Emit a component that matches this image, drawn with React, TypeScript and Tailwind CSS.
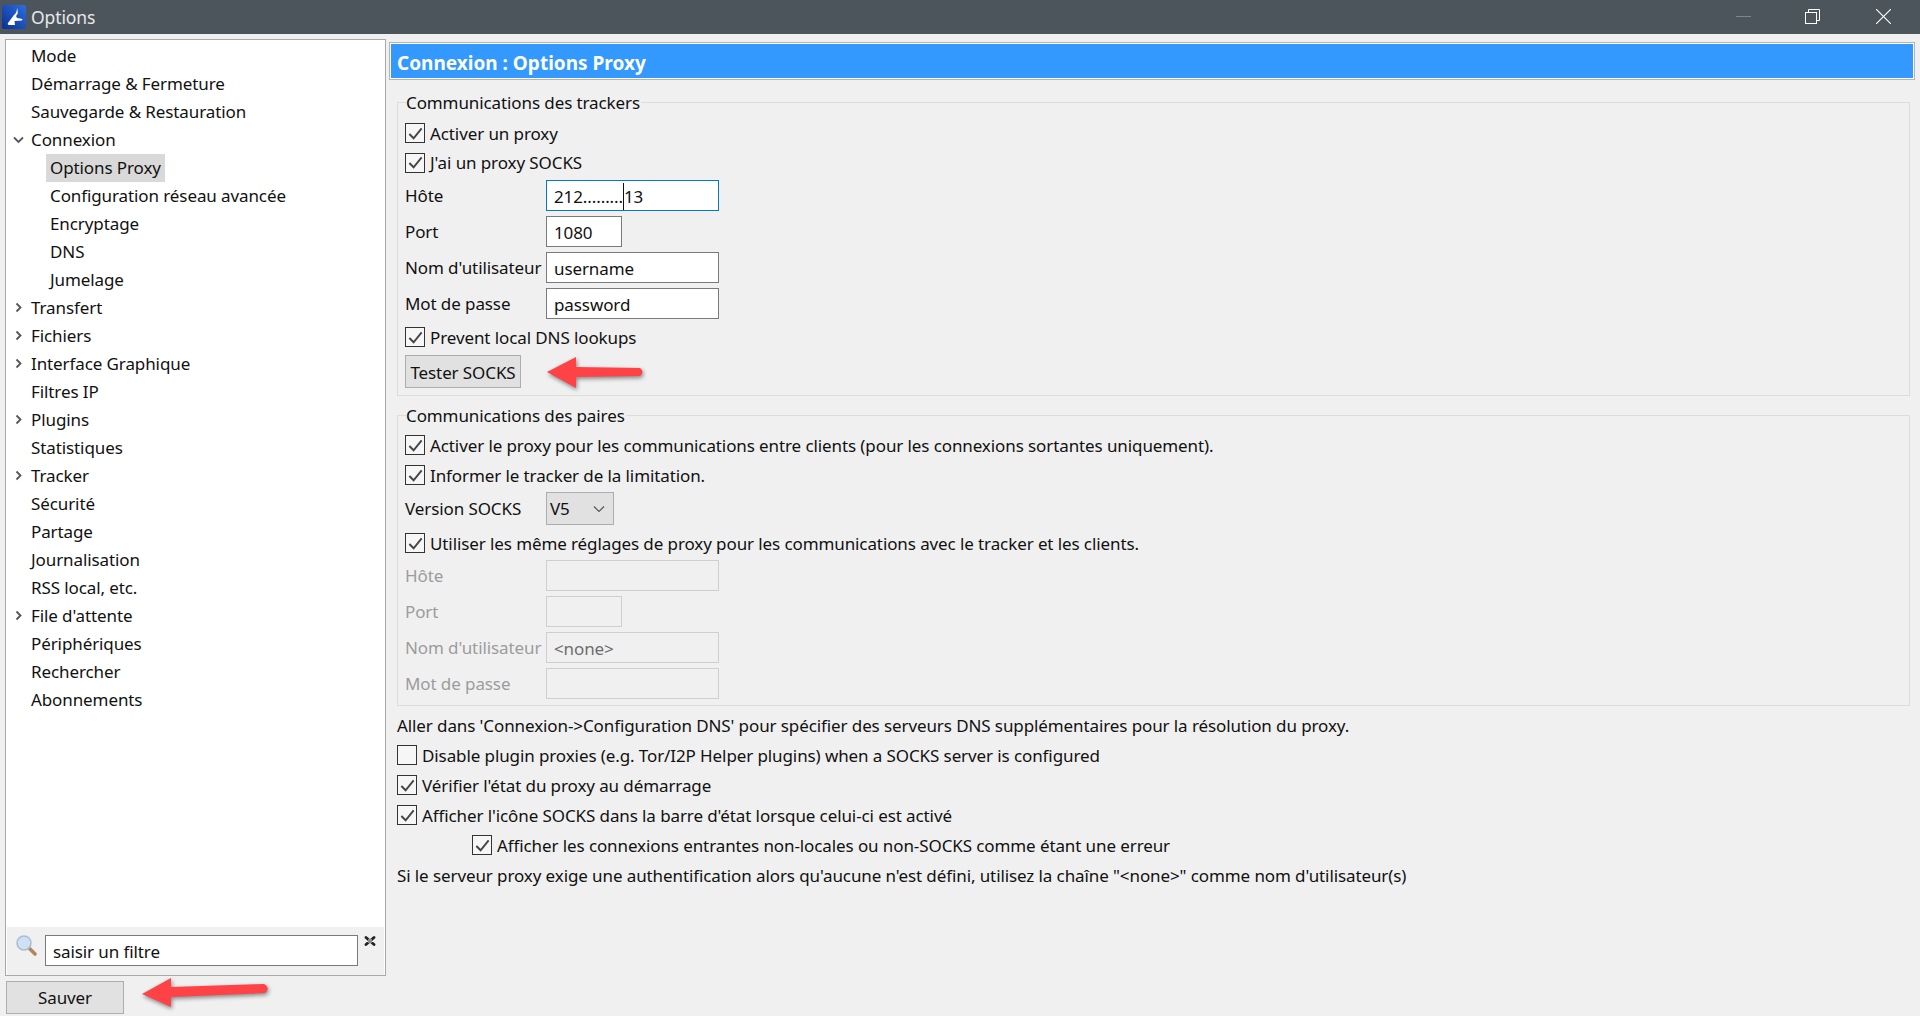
import React from "react";

const Tree = ({ label, arrow, child, selected }: { label: string; arrow?: "right" | "down"; child?: boolean; selected?: boolean }) => (
  <div className={`h-[28px] flex items-center ${child ? "pl-[44px]" : "pl-[25px]"} relative`}>
    {arrow && (
      <svg className="absolute left-[7px] top-[8px] w-[11px] h-[11px]" viewBox="0 0 11 11" fill="none" stroke="#555" strokeWidth="1.8">
        {arrow === "right" ? <path d="M3.5 1.5 L7.5 5.5 L3.5 9.5" /> : <path d="M1 3.5 L5.5 8 L10 3.5" />}
      </svg>
    )}
    <span className={`h-[28px] leading-[27px] whitespace-nowrap ${selected ? "bg-[#d9d9d9] px-[4px] -ml-[4px]" : ""}`}>{label}</span>
  </div>
);

const Check = ({ checked = true }: { checked?: boolean }) => (
  <span className="w-[20px] h-[20px] border-[1.5px] border-[#333] bg-[#f6f6f6] flex items-center justify-center shrink-0">
    {checked && (
      <svg viewBox="0 0 18 18" className="w-[17px] h-[17px]" fill="none" stroke="#444" strokeWidth="2">
        <path d="M2.5 9.5 L7 14 L15.5 3.5" />
      </svg>
    )}
  </span>
);

const CheckRow = ({ label, h = "h-[30px]", cls = "", checked }: { label: string; h?: string; cls?: string; checked?: boolean }) => (
  <div className={`${h} flex items-center gap-[5px] whitespace-nowrap ${cls}`}>
    <Check checked={checked} />
    <span className="pt-[1px]">{label}</span>
  </div>
);

const Field = ({ label, value, w = "w-[173px]", disabled, focus, cls = "" }: { label: string; value?: React.ReactNode; w?: string; disabled?: boolean; focus?: boolean; cls?: string }) => (
  <div className={`flex items-center h-[31px] ${cls}`}>
    <span className={`w-[141px] pt-[1px] whitespace-nowrap ${disabled ? "text-[#9c9c9c]" : ""}`}>{label}</span>
    <div className={`${w} h-[31px] border flex items-center pl-[7px] pt-[2px] ${focus ? "border-[#0078d7] bg-white" : disabled ? "border-[#cfcfcf] bg-[#f0f0f0] text-[#6d6d6d]" : "border-[#7a7a7a] bg-white"}`}>
      {value}
    </div>
  </div>
);

const Group = ({ title, children, cls = "" }: { title: string; children: React.ReactNode; cls?: string }) => (
  <div className={`relative border border-[#dcdcdc] mr-[5px] ${cls}`}>
    <span className="absolute left-[8px] -top-[13px] leading-[26px] bg-[#f0f0f0] pr-[1px] whitespace-nowrap">{title}</span>
    {children}
  </div>
);

const RedArrow = ({ cls, d, box }: { cls: string; d: string; box: string }) => (
  <svg className={`absolute ${cls}`} viewBox={box} fill="#ff4246" style={{ filter: "drop-shadow(1px 2px 2px rgba(0,0,0,.45))" }}>
    <path d={d} />
  </svg>
);

export default function App() {
  return (
    <div className="w-[1920px] h-[1016px] overflow-hidden bg-[#f0f0f0] text-[#111] text-[17px] tracking-[-0.1px] font-['Noto_Sans','Open_Sans',sans-serif] relative">
      <div className="h-[34px] bg-[#4d555c] flex items-center relative">
        <svg className="ml-[2px] w-[24px] h-[24px]" viewBox="0 0 24 24">
          <defs>
            <linearGradient id="logo" x1="0" y1="1" x2="1" y2="0">
              <stop offset="0" stopColor="#0b2f93" />
              <stop offset="1" stopColor="#2d6ee0" />
            </linearGradient>
          </defs>
          <rect width="24" height="24" rx="2" fill="url(#logo)" />
          <path d="M15 3 Q15 8 12 10 L6 18 Q5 20 8 20 L13 20 L12.5 16 L20 15.5 L20.5 14 L15 13 L14 11 Q17 8 15 3 Z" fill="#fff" />
        </svg>
        <span className="ml-[5px] text-[17.5px] text-[#e6e8ea]">Options</span>
        <svg className="absolute right-[169px] top-[16px] w-[15px] h-[1px]" viewBox="0 0 15 1"><rect width="15" height="1" fill="#7f868c" /></svg>
        <svg className="absolute right-[100px] top-[9px] w-[15px] h-[15px]" viewBox="0 0 15 15" fill="none" stroke="#fff" strokeWidth="1">
          <rect x="0.5" y="3.5" width="11" height="11" />
          <path d="M3.5 3 V0.5 H14.5 V11.5 H12" />
        </svg>
        <svg className="absolute right-[29px] top-[9px] w-[15px] h-[15px]" viewBox="0 0 15 15" stroke="#fff" strokeWidth="1.1">
          <path d="M0 0 L15 15 M15 0 L0 15" />
        </svg>
      </div>

      <div className="flex pl-[5px] pt-[5px]">
        <div className="w-[381px] shrink-0 flex flex-col">
          <div className="h-[937px] border border-[#a9a9a9] bg-white flex flex-col">
            <div className="flex-1 pt-[2px]">
              <Tree label="Mode" />
              <Tree label="Démarrage & Fermeture" />
              <Tree label="Sauvegarde & Restauration" />
              <Tree label="Connexion" arrow="down" />
              <Tree label="Options Proxy" child selected />
              <Tree label="Configuration réseau avancée" child />
              <Tree label="Encryptage" child />
              <Tree label="DNS" child />
              <Tree label="Jumelage" child />
              <Tree label="Transfert" arrow="right" />
              <Tree label="Fichiers" arrow="right" />
              <Tree label="Interface Graphique" arrow="right" />
              <Tree label="Filtres IP" />
              <Tree label="Plugins" arrow="right" />
              <Tree label="Statistiques" />
              <Tree label="Tracker" arrow="right" />
              <Tree label="Sécurité" />
              <Tree label="Partage" />
              <Tree label="Journalisation" />
              <Tree label="RSS local, etc." />
              <Tree label="File d'attente" arrow="right" />
              <Tree label="Périphériques" />
              <Tree label="Rechercher" />
              <Tree label="Abonnements" />
            </div>
            <div className="h-[48px] mx-[1px] bg-[#f0f0f0] flex items-start pt-[8px] pl-[9px]">
              <svg className="w-[21px] h-[21px] shrink-0" viewBox="0 0 21 21">
                <path d="M13.5 13.5 L19 19" stroke="#b5835a" strokeWidth="3.5" strokeLinecap="round" />
                <circle cx="8" cy="8" r="7" fill="#cfe0f5" stroke="#a9bcd2" strokeWidth="1.5" />
              </svg>
              <div className="ml-[8px] w-[313px] h-[31px] bg-white border border-[#7a7a7a] flex items-center pl-[7px] pt-[2px]">saisir un filtre</div>
              <svg className="ml-[6px] mt-[1px] w-[12px] h-[10px] shrink-0" viewBox="0 0 12 10" fill="none">
                <path d="M2 1.5 L10 8.5 M10 1.5 L2 8.5" stroke="#222" strokeWidth="2.8" strokeLinecap="round" />
                <rect x="4" y="3" width="4" height="4" fill="#8a8a8a" />
              </svg>
            </div>
          </div>
          <button className="mt-[5px] ml-[1px] w-[118px] h-[33px] bg-[#e1e1e1] border border-[#adadad] flex items-center justify-center pt-[1px]">Sauver</button>
        </div>

        <div className="flex-1 ml-[3px] pr-[5px]">
          <div className="mt-[3px] h-[38px] border border-[#b4b4b4] p-[1px] bg-white">
            <div className="h-full bg-[#3399ff] text-white font-bold text-[19px] tracking-normal flex items-center pl-[6px] pt-[5px] whitespace-nowrap">Connexion : Options Proxy</div>
          </div>

          <div className="pl-[8px]">
            <Group title="Communications des trackers" cls="mt-[22px] h-[294px] pl-[7px] pt-[15px]">
              <CheckRow label="Activer un proxy" />
              <CheckRow label="J'ai un proxy SOCKS" h="h-[29px]" />
              <Field label="Hôte" focus cls="mt-[3px]" value={<span className="flex items-center">212.........<span className="w-[1px] h-[27px] bg-[#111]" />13</span>} />
              <Field label="Port" value="1080" w="w-[76px]" cls="mt-[5px]" />
              <Field label="Nom d'utilisateur" value="username" cls="mt-[5px]" />
              <Field label="Mot de passe" value="password" cls="mt-[5px]" />
              <CheckRow label="Prevent local DNS lookups" cls="mt-[3px]" />
              <button className="mt-[3px] w-[116px] h-[33px] bg-[#e1e1e1] border border-[#adadad] flex items-center justify-center pt-[2px] whitespace-nowrap">Tester SOCKS</button>
            </Group>

            <Group title="Communications des paires" cls="mt-[19px] h-[291px] pl-[7px] pt-[14px]">
              <CheckRow label="Activer le proxy pour les communications entre clients (pour les connexions sortantes uniquement)." />
              <CheckRow label="Informer le tracker de la limitation." />
              <div className="flex items-center h-[33px] mt-[2px]">
                <span className="w-[141px] pt-[1px] whitespace-nowrap">Version SOCKS</span>
                <div className="w-[68px] h-[33px] bg-[#e1e1e1] border border-[#adadad] flex items-center pl-[3px] pt-[1px] relative">
                  V5
                  <svg className="absolute right-[8px] top-[12px] w-[12px] h-[8px]" viewBox="0 0 12 8" fill="none" stroke="#555" strokeWidth="1.2"><path d="M1 1.5 L6 6.5 L11 1.5" /></svg>
                </div>
              </div>
              <CheckRow label="Utiliser les même réglages de proxy pour les communications avec le tracker et les clients." cls="mt-[3px]" />
              <Field label="Hôte" disabled cls="mt-[2px]" />
              <Field label="Port" disabled w="w-[76px]" cls="mt-[5px]" />
              <Field label="Nom d'utilisateur" disabled value="<none>" cls="mt-[5px]" />
              <Field label="Mot de passe" disabled cls="mt-[5px]" />
            </Group>

            <div className="mt-[4px]">
              <div className="h-[30px] flex items-center pt-[1px] whitespace-nowrap">Aller dans 'Connexion-&gt;Configuration DNS' pour spécifier des serveurs DNS supplémentaires pour la résolution du proxy.</div>
              <CheckRow label="Disable plugin proxies (e.g. Tor/I2P Helper plugins) when a SOCKS server is configured" checked={false} />
              <CheckRow label="Vérifier l'état du proxy au démarrage" />
              <CheckRow label="Afficher l'icône SOCKS dans la barre d'état lorsque celui-ci est activé" />
              <CheckRow label="Afficher les connexions entrantes non-locales ou non-SOCKS comme étant une erreur" cls="pl-[75px]" />
              <div className="h-[30px] flex items-center pt-[1px] whitespace-nowrap">Si le serveur proxy exige une authentification alors qu'aucune n'est défini, utilisez la chaîne "&lt;none&gt;" comme nom d'utilisateur(s)</div>
            </div>
          </div>
        </div>
      </div>

      <RedArrow box="0 0 100 36" cls="left-[547px] top-[354px] w-[100px] h-[36px]" d="M0 18 L29 3 L29 13 L93 14 Q98 18 93 22 L29 23 L29 34 Z" />
      <RedArrow box="0 0 130 34" cls="left-[141px] top-[975px] w-[130px] h-[34px]" d="M1 19 L30 3 L30 12 L123 9 Q130 13 124 18 L30 22 L30 32 Z" />
    </div>
  );
}
